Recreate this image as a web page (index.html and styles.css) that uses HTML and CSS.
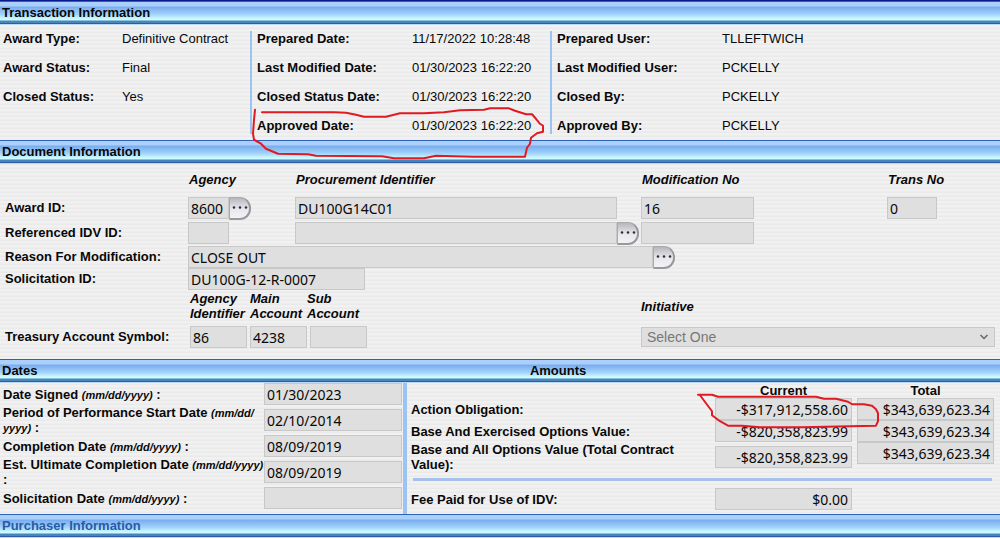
FILE: index.html
```html
<!DOCTYPE html>
<html lang="en">
<head>
<meta charset="utf-8">
<title>Transaction Information</title>
<link rel="stylesheet" href="styles.css">
</head>
<body>
<main class="page">
  <h2 class="bar">Transaction Information</h2>
  <section class="transaction">
    <dl class="facts facts-award">
      <dt>Award Type:</dt><dd>Definitive Contract</dd>
      <dt>Award Status:</dt><dd>Final</dd>
      <dt>Closed Status:</dt><dd>Yes</dd>
    </dl>
    <dl class="facts facts-dates">
      <dt>Prepared Date:</dt><dd>11/17/2022 10:28:48</dd>
      <dt>Last Modified Date:</dt><dd>01/30/2023 16:22:20</dd>
      <dt>Closed Status Date:</dt><dd>01/30/2023 16:22:20</dd>
      <dt>Approved Date:</dt><dd>01/30/2023 16:22:20</dd>
    </dl>
    <dl class="facts facts-users">
      <dt>Prepared User:</dt><dd>TLLEFTWICH</dd>
      <dt>Last Modified User:</dt><dd>PCKELLY</dd>
      <dt>Closed By:</dt><dd>PCKELLY</dd>
      <dt>Approved By:</dt><dd>PCKELLY</dd>
    </dl>
  </section>

  <h2 class="bar">Document Information</h2>
  <section class="document">
    <div class="doc-row doc-head">
      <span></span>
      <span>Agency</span>
      <span>Procurement Identifier</span>
      <span>Modification No</span>
      <span>Trans No</span>
    </div>
    <div class="doc-row doc-award">
      <label for="agency">Award ID:</label>
      <div class="combo"><input class="field w-agency" id="agency" value="8600" readonly><button class="more" type="button" aria-label="Choose agency"><svg viewBox="0 0 19 20"><circle cx="4" cy="9.500" r="1.300"/><circle cx="10" cy="9.500" r="1.300"/><circle cx="16" cy="9.500" r="1.300"/></svg></button></div>
      <div class="combo piid"><input class="field" aria-label="Procurement Identifier" value="DU100G14C01" readonly></div>
      <input class="field w-mod" aria-label="Modification No" value="16" readonly>
      <input class="field w-trans" aria-label="Trans No" value="0" readonly>
    </div>
    <div class="doc-row doc-idv">
      <label for="idv">Referenced IDV ID:</label>
      <input class="field w-agency" id="idv" readonly>
      <div class="combo idv"><input class="field" aria-label="Referenced IDV Identifier" readonly><button class="more" type="button" aria-label="Choose referenced IDV"><svg viewBox="0 0 19 20"><circle cx="4" cy="9.500" r="1.300"/><circle cx="10" cy="9.500" r="1.300"/><circle cx="16" cy="9.500" r="1.300"/></svg></button></div>
      <input class="field w-mod" aria-label="Referenced IDV Modification No" readonly>
    </div>
    <div class="doc-row">
      <label for="reason">Reason For Modification:</label>
      <div class="combo reason"><input class="field" id="reason" value="CLOSE OUT" readonly><button class="more" type="button" aria-label="Choose reason"><svg viewBox="0 0 19 20"><circle cx="4" cy="9.500" r="1.300"/><circle cx="10" cy="9.500" r="1.300"/><circle cx="16" cy="9.500" r="1.300"/></svg></button></div>
    </div>
    <div class="doc-row">
      <label for="solicitation">Solicitation ID:</label>
      <div class="wide"><input class="field w-solicitation" id="solicitation" value="DU100G-12-R-0007" readonly></div>
    </div>
    <div class="doc-row doc-subhead">
      <span></span>
      <div class="tas"><span>Agency Identifier</span><span>Main Account</span><span>Sub Account</span></div>
      <label for="initiative">Initiative</label>
    </div>
    <div class="doc-row">
      <label for="tas">Treasury Account Symbol:</label>
      <div class="tas"><input class="field" id="tas" value="86" readonly><input class="field" aria-label="Main Account" value="4238" readonly><input class="field" aria-label="Sub Account" readonly></div>
      <div class="pick"><select id="initiative" disabled><option>Select One</option></select><svg viewBox="0 0 10 8"><path d="M1.500 2 5 5.500 8.500 2"/></svg></div>
    </div>
  </section>

  <div class="bar bar-split"><h2>Dates</h2><h2>Amounts</h2></div>
  <section class="lower">
    <div class="dates">
      <label for="signed">Date Signed <i>(mm/dd/yyyy)</i> :</label>
      <input class="field" id="signed" value="01/30/2023" readonly>
      <label for="start">Period of Performance Start Date <i>(mm/dd/<wbr>yyyy)</i> :</label>
      <input class="field" id="start" value="02/10/2014" readonly>
      <label for="completion">Completion Date <i>(mm/dd/yyyy)</i> :</label>
      <input class="field" id="completion" value="08/09/2019" readonly>
      <label for="ultimate">Est. Ultimate Completion Date <i>(mm/dd/yyyy)</i> :</label>
      <input class="field" id="ultimate" value="08/09/2019" readonly>
      <label for="soldate">Solicitation Date <i>(mm/dd/yyyy)</i> :</label>
      <input class="field" id="soldate" readonly>
    </div>
    <div class="amounts">
      <table>
        <colgroup><col><col class="money"><col class="money"></colgroup>
        <thead><tr><td></td><th scope="col">Current</th><th scope="col">Total</th></tr></thead>
        <tbody>
          <tr><th scope="row">Action Obligation:</th>
            <td><input class="field" aria-label="Action Obligation, current" value="-$317,912,558.60" readonly></td>
            <td><input class="field" aria-label="Action Obligation, total" value="$343,639,623.34" readonly></td></tr>
          <tr><th scope="row">Base And Exercised Options Value:</th>
            <td><input class="field" aria-label="Base And Exercised Options Value, current" value="-$820,358,823.99" readonly></td>
            <td><input class="field" aria-label="Base And Exercised Options Value, total" value="$343,639,623.34" readonly></td></tr>
          <tr><th scope="row">Base and All Options Value (Total Contract Value):</th>
            <td><input class="field" aria-label="Base and All Options Value, current" value="-$820,358,823.99" readonly></td>
            <td class="top"><input class="field" aria-label="Base and All Options Value, total" value="$343,639,623.34" readonly></td></tr>
        </tbody>
      </table>
      <hr>
      <div class="fee"><label for="fee">Fee Paid for Use of IDV:</label><input class="field" id="fee" value="$0.00" readonly></div>
    </div>
  </section>

  <h2 class="bar bar-muted">Purchaser Information</h2>

  <svg class="ink" viewBox="0 0 1000 539" preserveAspectRatio="none" aria-hidden="true">
    <path d="M262 112.500H334L346 113 356 115 364 117H386L400 113.500 424 113.500 444 112.500 460 110.500 484 110 490 108.500H509L515 111 526 114.500H532L536 119 540 124 543 126V132L537 133.500 531 138 530 144 527 148 525 157H474L436 156 424 158.500H394L382 156.500 316 156 308 154.500 278 154 266 149 261 144 254 140 253 134 254 120 255 110"/>
    <path d="M698 395.500H712L718 397.500H816L824 399.500H836L848 402.500 852 405H864L872 406.500 876 410 878 414V422L876 426.500 850 427 802 428H760L742 426.500H728L720 422 712 416V412L700 396"/>
  </svg>
</main>
</body>
</html>
```
FILE: styles.css
```css
* { box-sizing: border-box; }

body {
  margin: 0;
  background: #fff;
  color: #080808;
  font: 13px/16px "Liberation Sans", Arial, sans-serif;
}

.page {
  position: relative;
  border-top: 1px solid #081c90;
  background: repeating-linear-gradient(#f1f1f1 0 2px, #eaeaea 3px 4px);
}

.bar {
  margin: 0;
  padding: 4px 2px;
  font-size: 13px;
  line-height: 16px;
  font-weight: bold;
  background: linear-gradient(#2c62b8 0 1px, #acd0fc 1px 5px, #78acee 6px, #a0d0fa 13px, #ccfcff 18px 19px, #4a84b8 20px 22px, #2c5cae 22px 23px, #bcd8fa 23px);
}
.bar-split { display: grid; grid-template-columns: 53fr 47fr; }
.bar-split h2 { margin: 0; font-size: 13px; }
.bar-muted { color: #2a5aa6; }

.transaction {
  display: grid;
  grid-template-columns: 25fr 30fr 45fr;
  padding: 6px 0;
}
.facts {
  display: grid;
  grid-auto-rows: 16px;
  row-gap: 13px;
  margin: 0;
  padding-left: 5px;
}
.facts dt { font-weight: bold; }
.facts dd { margin: 0; }
.facts-award { grid-template-columns: 119px 1fr; padding-left: 3px; }
.facts-dates { grid-template-columns: 155px 1fr; border-left: 2px solid #9cc4f2; }
.facts-users { grid-template-columns: 165px 1fr; border-left: 2px solid #9cc4f2; }

.field {
  display: block;
  width: 100%;
  min-width: 0;
  height: 22px;
  margin: 0;
  padding: 0 2px;
  border: 1px solid #c8c8c8;
  border-radius: 0;
  background: #dfdfdf;
  color: #080808;
  font: 14px/20px "Noto Sans", "Open Sans", sans-serif;
}

.document { padding-bottom: 11px; font-weight: bold; }
.doc-row {
  display: grid;
  grid-template-columns: 188fr 107fr 346fr 246fr 113fr;
  align-items: center;
}
.doc-row > :first-child { padding-left: 5px; }
.doc-head { padding: 8px 0 9px; font-style: italic; }
.doc-head span { padding-left: 1px; }
.doc-award { padding-bottom: 3px; }
.doc-idv { padding-bottom: 2px; }
.combo { display: flex; height: 22px; }
.combo .field { flex: 1; }
.combo .w-agency { flex: none; }
.w-agency { width: 41px; }
.w-mod { width: 113px; }
.w-trans { width: 50px; }
.w-solicitation { width: 177px; }
.piid { padding-right: 24px; }
.idv { padding-right: 2px; }
.reason { grid-column: 2 / 5; margin-right: 212px; }
.wide { grid-column: 2 / 5; }

.more {
  flex: none;
  width: 22px;
  height: 23px;
  padding: 0;
  border: 1px solid #a8a8ae;
  border-right: 2px solid #98989e;
  border-bottom: 2px solid #98989e;
  border-radius: 1px 11px 11px 1px;
  background: linear-gradient(#b6b6bc, #d6d6dc 35%, #e6e6ec 50%, #f2f2f6);
}
.more svg { display: block; width: 19px; height: 20px; fill: #30303a; }

.doc-subhead { padding: 1px 0 5px; font-style: italic; line-height: 15px; }
.tas {
  grid-column: 2 / 4;
  display: grid;
  grid-template-columns: repeat(3, 57px);
  gap: 3px;
  padding-left: 2px;
}
.doc-subhead .tas span:last-child { margin-left: -3px; }
.doc-subhead label { grid-column: 4; }
.pick { position: relative; grid-column: 4 / 6; margin-right: 5px; }
.pick select {
  display: block;
  width: 100%;
  height: 20px;
  padding: 0 5px;
  border: 1px solid #c8c8c8;
  border-radius: 0;
  appearance: none;
  background: #dfdfdf;
  color: #777;
  opacity: 1;
  font: 14px/18px "Liberation Sans", Arial, sans-serif;
}
.pick svg {
  position: absolute;
  top: 6px;
  right: 6px;
  width: 10px;
  height: 8px;
  fill: none;
  stroke: #666;
  stroke-width: 1.5;
}

.lower { display: grid; grid-template-columns: 403fr 597fr; font-weight: bold; line-height: 15px; }
.dates {
  display: grid;
  grid-template-columns: 1fr 138px;
  align-items: center;
  align-content: start;
  padding: 0 1px 5px 3px;
}
.dates i { font-size: 11px; line-height: 11px; }
.amounts { border-left: 4px solid #9cc4f2; padding: 0 1px 3px 0; }
.amounts table { width: 100%; border-collapse: collapse; table-layout: fixed; }
.amounts .money { width: 142px; }
.amounts td, .amounts th { padding: 0 5px 0 0; vertical-align: middle; }
.amounts tbody th, .fee { padding-left: 4px; text-align: left; }
.amounts td.top { vertical-align: top; }
.amounts .field { text-align: right; padding-right: 3px; }
.amounts hr { height: 3px; margin: 6px 7px 7px 6px; border: 0; background: #a6c2ea; }
.fee { display: grid; grid-template-columns: 1fr 137px; align-items: center; padding-right: 147px; }

.ink {
  position: absolute;
  left: 0;
  top: -1px;
  width: 100%;
  height: calc(100% + 1px);
  pointer-events: none;
  fill: none;
  stroke: #e01a22;
  stroke-width: 2;
  stroke-linejoin: round;
  stroke-linecap: round;
}
```
